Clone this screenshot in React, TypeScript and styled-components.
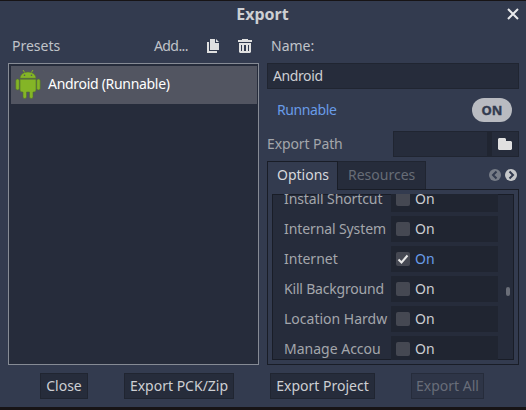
import React from "react";
import styled, { createGlobalStyle } from "styled-components";

const Global = createGlobalStyle`
  * { box-sizing: border-box; }
  body { margin: 0; background: #171416; overflow: hidden; }
  svg { display: block; flex: none; }
`;

const Dialog = styled.div`
  width: 526px;
  height: 410px;
  border: solid #171416;
  border-width: 1px 0 3px;
  background: #333b4f;
  color: #cdcfd3;
  font: 14px/20px "Noto Sans", sans-serif;
  white-space: nowrap;
`;

const TitleBar = styled.header`
  display: grid;
  grid-template-columns: 1fr auto 1fr;
  align-items: center;
  height: 28px;
  padding: 0 7px 2px 0;
`;

const Title = styled.h1`
  grid-column: 2;
  margin: 0 0 0 6px;
  font-size: 16px;
  line-height: 24px;
`;

const CloseIcon = styled.svg`
  justify-self: end;
`;

const Columns = styled.main`
  display: grid;
  grid-template-columns: 251px 252px;
  column-gap: 8px;
  height: 336px;
  padding: 0 0 0 8px;
`;

const Column = styled.section`
  display: flex;
  flex-direction: column;
  min-width: 0;
`;

const Heading = styled.div`
  display: flex;
  align-items: center;
  height: 34px;
  padding: 0 7px 0 4px;
`;

const Actions = styled.div`
  display: flex;
  align-items: center;
  gap: 19px;
  margin-left: auto;
`;

const Label = styled.span<{ $color?: string; $spacing?: number }>`
  color: ${(p) => p.$color ?? "#c0c3c9"};
  letter-spacing: ${(p) => p.$spacing ?? 0}px;
`;

const PresetList = styled.div`
  height: 302px;
  padding: 2px 1px;
  padding-left: 2px;
  border: 1px solid #868b95;
  background: #262c3b;
`;

const Preset = styled.div`
  display: flex;
  align-items: center;
  gap: 7px;
  height: 38px;
  padding: 0 0 2px 4px;
  background: #525561;
`;

const Field = styled.div`
  display: flex;
  align-items: center;
  height: 26px;
  padding: 0 5px;
  border: 1px solid #202531;
  background: #262c3b;
  letter-spacing: -0.4px;
`;

const RunnableRow = styled.div`
  display: flex;
  align-items: center;
  justify-content: space-between;
  height: 42px;
  padding: 0 7px 0 10px;
`;

const Toggle = styled.div`
  width: 40px;
  height: 24px;
  border-radius: 12px;
  background: #b9bbc1;
  color: #333b4f;
  text-align: center;
  font: 700 13px/24px "Noto Sans", sans-serif;
  -webkit-text-stroke: 0.4px #333b4f;
`;

const PathRow = styled.div`
  display: flex;
  align-items: center;
  justify-content: space-between;
  height: 26px;
`;

const PathPicker = styled.div`
  display: grid;
  grid-template-columns: 1fr 5px 26px;
  width: 126px;
  height: 26px;
  border: 1px solid #202531;
  background: #262c3b;
`;

const PathDivider = styled.div`
  grid-column: 2;
  background: #202531;
`;

const PathButton = styled.div`
  display: grid;
  place-items: center;
`;

const TabBar = styled.div`
  display: flex;
  height: 29px;
  margin-top: 4px;
`;

const Tab = styled.div<{ $active?: boolean }>`
  width: ${(p) => (p.$active ? 71 : 88)}px;
  height: ${(p) => (p.$active ? 29 : 28)}px;
  padding-left: ${(p) => (p.$active ? 9 : 10)}px;
  border: solid ${(p) => (p.$active ? "#191d27" : "#202531")};
  border-width: 1px 1px 0 ${(p) => (p.$active ? 1 : 0)}px;
  background: ${(p) => (p.$active ? "#333b4f" : "#262c3b")};
  color: ${(p) => (p.$active ? "#d6d8dc" : "#676c77")};
  line-height: 26px;
  z-index: 1;
`;

const TabArrows = styled.div`
  display: flex;
  align-items: center;
  gap: 4px;
  margin: 0 2px 1px auto;
`;

const TabPanel = styled.div`
  height: 176px;
  margin-top: -1px;
  padding: 4px;
  border: 1px solid #191d27;
`;

const Inspector = styled.div`
  display: grid;
  grid-template-columns: 1fr 12px;
  height: 166px;
  overflow: hidden;
  background: #262c3b;
  box-shadow: inset 0 0 0 1px #191d27;
`;

const Properties = styled.div`
  display: flex;
  flex-direction: column;
  gap: 4px;
  margin-top: -8px;
`;

const Property = styled.div`
  display: grid;
  grid-template-columns: 103px 107px;
  column-gap: 4px;
  height: 26px;
  flex: none;
  padding-left: 12px;
  line-height: 25px;
`;

const Value = styled.div<{ $on?: boolean }>`
  display: flex;
  align-items: center;
  gap: 5px;
  height: 26px;
  padding: 0 0 1px 5px;
  background: #202531;
  color: ${(p) => (p.$on ? "#699ce8" : "#cdcfd3")};
  line-height: 24px;
`;

const CheckBox = styled.div`
  width: 14px;
  height: 14px;
  border-radius: 2px;
  background: #454852;
`;

const Grabber = styled.div`
  width: 4px;
  height: 9px;
  margin: 93px 0 0 4px;
  border-radius: 2px;
  background: #6a6e78;
`;

const Footer = styled.footer`
  display: flex;
  gap: 36px;
  padding: 8px 0 0 40px;
`;

const Button = styled.button<{ $width: number }>`
  width: ${(p) => p.$width}px;
  height: 26px;
  padding: 0;
  border: 1px solid #202531;
  background: #262c3b;
  color: #cdcfd3;
  font: 14px/22px "Noto Sans", sans-serif;
  &:disabled { border-color: #262c3b; background: #2e3547; color: #686d79; }
`;

const DuplicateIcon = () => (
  <svg width="12" height="14" fill="#e0e0e0">
    <path d="M3 0h5v4h4v7H3zM9 0l3 3H9zM0 3h2v9h8v2H0z" />
  </svg>
);

const TrashIcon = () => (
  <svg width="14" height="14" fill="#e0e0e0">
    <path d="M4 0h6v1h4v2H0V1h4z" />
    <path fillRule="evenodd" d="M1 4h12v9l-1 1H2l-1-1zm2 2v6h1V6zm3 0v6h2V6zm4 0v6h1V6z" />
  </svg>
);

const AndroidIcon = () => (
  <svg width="26" height="30" viewBox="0 0 26 30">
    <g fill="#84b526" stroke="#53702d" strokeWidth=".6">
      <path d="M8 1l2 3M18 1l-2 3" stroke="#84b526" strokeWidth="1" />
      <path d="M5 9.3C5 5.800 8.500 3 13 3s8 2.800 8 6.300z" />
      <path d="M5 10.200h16V21q0 2-2 2h-1v5q0 1.500-1.700 1.500T14.500 28v-5h-3v5q0 1.500-1.800 1.500T8 28v-5H7q-2 0-2-2z" />
      <rect x=".8" y="10" width="3.500" height="11" rx="1.700" />
      <rect x="21.700" y="10" width="3.500" height="11" rx="1.700" />
    </g>
    <circle cx="9.500" cy="6.300" r=".8" fill="#525561" />
    <circle cx="16.500" cy="6.300" r=".8" fill="#525561" />
  </svg>
);

const Arrow = ({ right }: { right?: boolean }) => (
  <svg width="12" height="12" fill="none">
    <circle cx="6" cy="6" r="6" fill={right ? "#c6c8ca" : "#777c87"} />
    <path d={right ? "M4.500 2.500L8 6 4.500 9.500" : "M7.500 2.500L4 6l3.500 3.500"} stroke="#333b4f" strokeWidth="2" />
  </svg>
);

const properties = [
  { name: "Install Shortcut", spacing: -0.1 },
  { name: "Internal System", spacing: -0.1 },
  { name: "Internet", on: true },
  { name: "Kill Background", spacing: -0.2 },
  { name: "Location Hardw" },
  { name: "Manage Accou" },
];

export default function App() {
  return (
    <Dialog>
      <Global />
      <TitleBar>
        <Title>Export</Title>
        <CloseIcon width="12" height="12" fill="none" stroke="#e8e9eb" strokeWidth="2">
          <path d="M1 1l10 10M11 1L1 11" />
        </CloseIcon>
      </TitleBar>
      <Columns>
        <Column>
          <Heading>
            <Label>Presets</Label>
            <Actions>
              <Label $spacing={-0.55}>Add...</Label>
              <DuplicateIcon />
              <TrashIcon />
            </Actions>
          </Heading>
          <PresetList>
            <Preset>
              <AndroidIcon />
              <Label $color="#fff" $spacing={-0.3}>Android (Runnable)</Label>
            </Preset>
          </PresetList>
        </Column>
        <Column>
          <Heading><Label>Name:</Label></Heading>
          <Field>Android</Field>
          <RunnableRow>
            <Label $color="#699ce8" $spacing={-0.4}>Runnable</Label>
            <Toggle>ON</Toggle>
          </RunnableRow>
          <PathRow>
            <Label $color="#a3a6ab" $spacing={-0.1}>Export Path</Label>
            <PathPicker>
              <PathDivider />
              <PathButton>
                <svg width="14" height="12" fill="#e0e0e0">
                  <path d="M1 0h6l1 1v2h5l1 1v7l-1 1H1l-1-1V1z" />
                </svg>
              </PathButton>
            </PathPicker>
          </PathRow>
          <TabBar>
            <Tab $active>Options</Tab>
            <Tab>Resources</Tab>
            <TabArrows><Arrow /><Arrow right /></TabArrows>
          </TabBar>
          <TabPanel>
            <Inspector>
              <Properties>
                {properties.map(({ name, on, spacing }) => (
                  <Property key={name}>
                    <Label $color="#a3a6ab" $spacing={spacing}>{name}</Label>
                    <Value $on={on}>
                      <CheckBox>
                        {on && (
                          <svg width="14" height="14" fill="none" stroke="#e8e8e8" strokeWidth="2">
                            <path d="M2.500 7.500l3 3L11.500 3.500" />
                          </svg>
                        )}
                      </CheckBox>
                      On
                    </Value>
                  </Property>
                ))}
              </Properties>
              <Grabber />
            </Inspector>
          </TabPanel>
        </Column>
      </Columns>
      <Footer>
        <Button $width={48}>Close</Button>
        <Button $width={110}>Export PCK/Zip</Button>
        <Button $width={105}>Export Project</Button>
        <Button $width={73} disabled>Export All</Button>
      </Footer>
    </Dialog>
  );
}
